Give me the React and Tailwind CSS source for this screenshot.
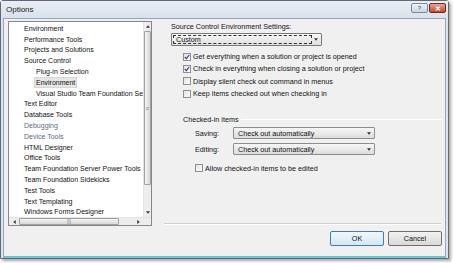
import React from 'react'

const treeItems = [
	{ label: 'Environment', level: 0 },
	{ label: 'Performance Tools', level: 0 },
	{ label: 'Projects and Solutions', level: 0 },
	{ label: 'Source Control', level: 0 },
	{ label: 'Plug-in Selection', level: 1 },
	{ label: 'Environment', level: 1, selected: true },
	{ label: 'Visual Studio Team Foundation Se', level: 1 },
	{ label: 'Text Editor', level: 0 },
	{ label: 'Database Tools', level: 0 },
	{ label: 'Debugging', level: 0, dim: true },
	{ label: 'Device Tools', level: 0, dim: true },
	{ label: 'HTML Designer', level: 0 },
	{ label: 'Office Tools', level: 0 },
	{ label: 'Team Foundation Server Power Tools', level: 0 },
	{ label: 'Team Foundation Sidekicks', level: 0 },
	{ label: 'Test Tools', level: 0 },
	{ label: 'Text Templating', level: 0 },
	{ label: 'Windows Forms Designer', level: 0 },
]

const sourceOptions = [
	{ label: 'Get everything when a solution or project is opened', checked: true },
	{ label: 'Check in everything when closing a solution or project', checked: true },
	{ label: 'Display silent check out command in menus', checked: false },
	{ label: 'Keep items checked out when checking in', checked: false },
]

function CheckBox({ checked }) {
	return (
		<span className="w-[8px] h-[8px] border border-[#8f8f8f] bg-gradient-to-br from-[#e4e4e4] to-[#fbfbfb] flex items-center justify-center shrink-0">
			{checked && (
				<svg width="6" height="6" viewBox="0 0 6 6">
					<path d="M0.8 3 L2.4 4.6 L5.2 1" stroke="#2a3f8f" strokeWidth="1.2" fill="none" />
				</svg>
			)}
		</span>
	)
}

function Arrow({ dir = 'down' }) {
	const d = {
		down: 'M0 0 L4 0 L2 2.5 Z',
		up: 'M0 2.5 L4 2.5 L2 0 Z',
		left: 'M2.5 0 L2.5 4 L0 2 Z',
		right: 'M0 0 L0 4 L2.5 2 Z',
	}[dir]
	const horiz = dir === 'left' || dir === 'right'
	return (
		<svg width={horiz ? 3 : 4} height={horiz ? 4 : 3} viewBox={horiz ? '0 0 2.5 4' : '0 0 4 2.5'}>
			<path d={d} fill="#333" />
		</svg>
	)
}

function Select({ value, width }) {
	return (
		<div className={`${width} h-[12px] border border-[#8d8d8d] bg-gradient-to-b from-[#f6f6f6] to-[#dddddd] rounded-[1px] flex items-center pl-[4px] pr-[3px]`}>
			<span className="flex-1 leading-none">{value}</span>
			<Arrow />
		</div>
	)
}

function App() {
	return (
		<div className="w-[454px] h-[263px] bg-white" style={{ fontFamily: '"Liberation Sans", Arial, sans-serif' }}>
			<div className="w-[449px] h-[259px] border border-[#5f6a74] rounded-t-[3px] bg-[#dbe5ef] flex flex-col shadow-[2px_2px_3px_rgba(0,0,0,0.35)] text-[7.2px] text-[#111]">
				{/* title bar */}
				<div className="h-[17px] shrink-0 flex items-center pl-[5px] pr-[2px] bg-gradient-to-b from-[#e9eef4] to-[#d8e2ec]">
					<span className="flex-1 text-[8px] text-[#222]">Options</span>
					<div className="flex gap-[1px] self-start mt-[2px]">
						<span className="w-[17px] h-[10px] border border-[#7b8a99] rounded-[2px] bg-gradient-to-b from-[#eef3f8] to-[#c9d6e4] flex items-center justify-center text-[6px] text-[#3b4c60] leading-none">?</span>
						<span className="w-[17px] h-[10px] border border-[#6e2b22] rounded-[2px] bg-gradient-to-b from-[#e8a497] to-[#c5452f] flex items-center justify-center text-[7px] text-white font-bold leading-none">✕</span>
					</div>
				</div>

				{/* body */}
				<div className="flex-1 mx-[2px] border border-[#9aa6b2] border-b-[#5ec6dc] border-b-2 bg-[#f0f0f0] flex pl-[4px] pt-[2px] pr-[3px]">
					{/* tree list */}
					<div className="w-[144px] h-[205px] border border-[#828790] bg-white flex flex-col shrink-0">
						<div className="flex flex-1 min-h-0">
							<div className="flex-1 pt-[1px] overflow-hidden whitespace-nowrap text-[7px]">
								{treeItems.map((item, i) => (
									<div key={i} className={`h-[10.8px] flex items-center ${item.level ? 'pl-[26px]' : 'pl-[14px]'}`}>
										<span className={`leading-none px-[1px] py-[1px] ${item.selected ? 'bg-[#e6e6e6] border border-[#d6d6d6] -ml-[1px]' : ''} ${item.dim ? 'text-[#5d6b7a]' : ''}`}>{item.label}</span>
									</div>
								))}
							</div>
							{/* vertical scrollbar */}
							<div className="w-[8px] bg-[#ededed] border-l border-[#e3e3e3] flex flex-col items-center">
								<div className="h-[9px] flex items-center"><Arrow dir="up" /></div>
								<div className="w-[7px] h-[154px] border border-[#a0a0a0] rounded-[1px] bg-gradient-to-r from-[#f4f4f4] to-[#d8d8d8] flex items-center justify-center">
									<span className="text-[5px] leading-none text-[#777]">≡</span>
								</div>
								<div className="flex-1" />
								<div className="h-[9px] flex items-center"><Arrow /></div>
							</div>
						</div>
						{/* horizontal scrollbar */}
						<div className="h-[8px] bg-[#ededed] border-t border-[#e3e3e3] flex items-center">
							<div className="w-[10px] flex justify-center"><Arrow dir="left" /></div>
							<div className="w-[100px] h-[7px] border border-[#a0a0a0] rounded-[1px] bg-gradient-to-b from-[#f4f4f4] to-[#d8d8d8] flex items-center justify-center">
								<span className="text-[5px] leading-none text-[#777]">|||</span>
							</div>
							<div className="flex-1" />
							<div className="w-[10px] flex justify-center"><Arrow dir="right" /></div>
							<div className="w-[8px] h-full bg-[#ededed]" />
						</div>
					</div>

					{/* right panel */}
					<div className="flex-1 ml-[12px] flex flex-col">
						<div className="pl-[7px] pt-[1px]">
							<div className="h-[10px] flex items-center">Source Control Environment Settings:</div>
							<div className="mt-[1px] w-[151px] h-[13px] border border-[#7a7a7a] rounded-[1px] bg-gradient-to-b from-[#f7f7f7] to-[#e0e0e0] flex items-center p-[1px]">
								<div className="flex-1 h-full border border-dashed border-[#333] flex items-center pl-[2px] leading-none">Custom</div>
								<div className="w-[8px] flex justify-center"><Arrow /></div>
							</div>
							<div className="mt-[6px] pl-[12px] flex flex-col gap-[3.4px]">
								{sourceOptions.map((o, i) => (
									<div key={i} className="h-[9px] flex items-center gap-[2px] whitespace-nowrap">
										<CheckBox checked={o.checked} />
										<span className="leading-none">{o.label}</span>
									</div>
								))}
							</div>

							<div className="mt-[18px] pl-[12px] flex items-center">
								<span className="leading-none pr-[2px]">Checked-in items</span>
								<div className="flex-1 h-[1px] bg-[#d5dfe5] border-b border-white" />
							</div>
							<div className="pl-[24px] mt-[4px] flex flex-col gap-[4px]">
								<div className="flex items-center">
									<span className="w-[38px] leading-none">Saving:</span>
									<Select value="Check out automatically" width="w-[142px]" />
								</div>
								<div className="flex items-center">
									<span className="w-[38px] leading-none">Editing:</span>
									<Select value="Check out automatically" width="w-[142px]" />
								</div>
								<div className="mt-[5px] flex items-center gap-[2px]">
									<CheckBox checked={false} />
									<span className="leading-none">Allow checked-in items to be edited</span>
								</div>
							</div>
						</div>
						<div className="flex-1" />
						<div className="h-[2px] border-t border-[#d0d0d0] border-b border-b-white mb-[6px] mr-[1px]" />
						<div className="flex justify-end gap-[4px] mb-[10px]">
							<button className="w-[54px] h-[15px] border border-[#3c7fb1] rounded-[2px] bg-gradient-to-b from-[#f2f8fc] to-[#d4e7f5] text-[7.2px] leading-none">OK</button>
							<button className="w-[54px] h-[15px] border border-[#707070] rounded-[2px] bg-gradient-to-b from-[#f2f2f2] to-[#d9d9d9] text-[7.2px] leading-none">Cancel</button>
						</div>
					</div>
				</div>
			</div>
		</div>
	)
}

export default App
